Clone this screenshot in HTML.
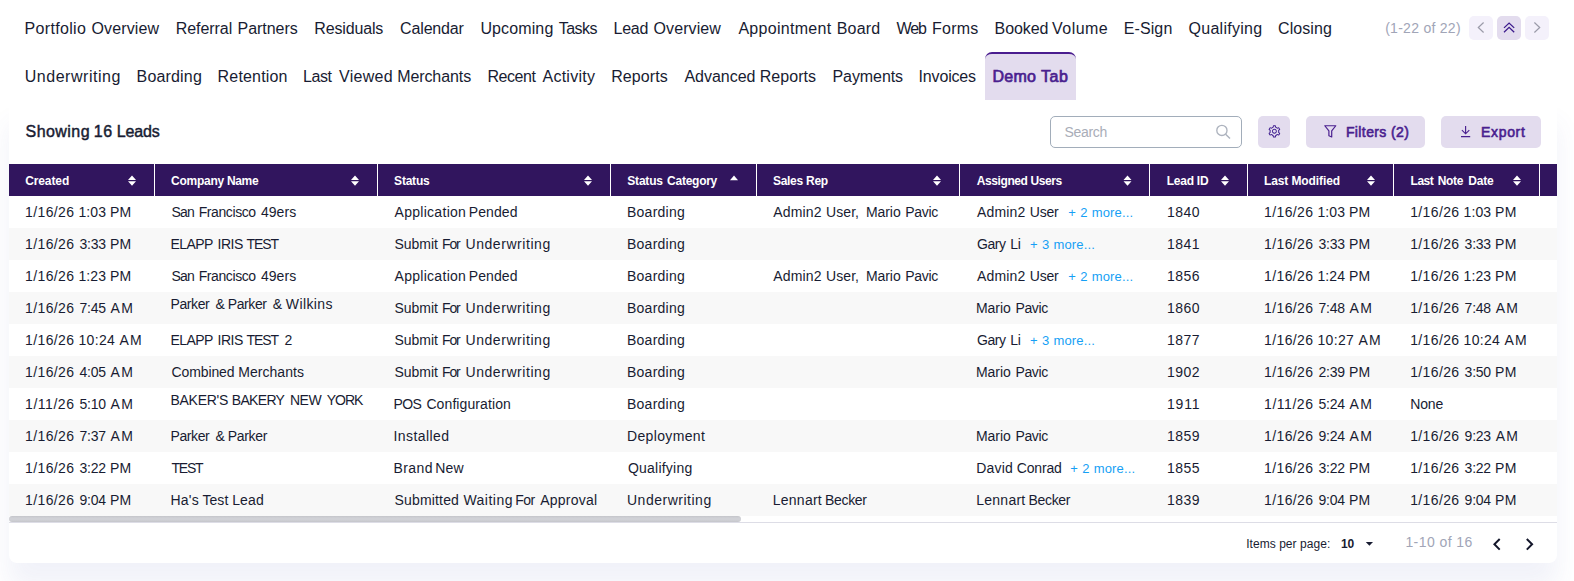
<!DOCTYPE html>
<html lang="en">
<head>
<meta charset="utf-8">
<title>Leads - Demo Tab</title>
<style>
*{box-sizing:border-box;margin:0;padding:0}
html,body{width:1574px;height:581px;overflow:hidden;background:#fff}
body{position:relative;font-family:"Liberation Sans", sans-serif;}
.t{position:absolute;display:block;white-space:pre;line-height:20px;height:20px;margin:0}
.f0{font-size:16px;font-weight:400;color:#181c32}
.f1{font-size:16px;font-weight:400;color:#4a1f8f}
.f2{font-size:14px;font-weight:400;color:#a1a5b7}
.f3{font-size:14px;font-weight:400;color:#a9adb8}
.f4{font-size:14px;font-weight:400;color:#4a1f8f}
.f5{font-size:12px;font-weight:400;color:#181c32}
.f6{font-size:12px;font-weight:700;color:#181c32}
.f7{font-size:12px;font-weight:700;color:#ffffff}
.f8{font-size:14px;font-weight:400;color:#181c32}
.f9{font-size:13px;font-weight:400;color:#169ff5}
h2{font:inherit}
a{color:inherit;text-decoration:none}
.semi{-webkit-text-stroke:0.45px currentColor}
.semi2{-webkit-text-stroke:0.7px currentColor}
.semi3{-webkit-text-stroke:0.6px currentColor}
.ic{position:absolute;display:block;overflow:visible}
.tabbar{position:absolute;left:0;top:0;width:1574px;height:100px;background:#fff}
.tab-active{position:absolute;left:985px;top:52px;width:91px;height:48px;background:#e3dcee;border-top:2px solid #4a1d8f;border-radius:7px 7px 0 0}
.pgbtn{position:absolute;top:16px;width:24px;height:24px;border-radius:5px;background:#f4f1fb}
.pgbtn.on{background:#e3dcee}
.card{position:absolute;left:9px;top:100px;width:1548px;height:463px;background:#fff;border-radius:0 0 8px 8px;box-shadow:0 24px 26px 0 rgba(72,84,176,.078)}
.search{position:absolute;left:1050px;top:116px;width:192px;height:32px;border:1px solid #a2adba;border-radius:5px;background:#fff}
.btn{position:absolute;top:116px;height:32px;border-radius:5px;background:#e3dcee}
.thead{position:absolute;left:0;top:64px;width:1548px;height:32px;background:#31155e}
.sep{position:absolute;top:0;width:1px;height:32px;background:#fff}
.row{position:absolute;left:0;width:1548px;height:32px;background:#fff}
.row.alt{background:#f8f8f8}
.sthumb{position:absolute;left:0;top:416px;width:732px;height:6px;border-radius:3px;background:linear-gradient(#c4c5ca,#d0d1d6 35%,#d0d1d6 65%,#c4c5ca)}
.hr{position:absolute;left:0;top:422px;width:1548px;height:1px;background:#dddde6}
</style>
</head>
<body>
<div class="card">
  <div class="thead"><i class="sep" style="left:145px"></i><i class="sep" style="left:368px"></i><i class="sep" style="left:601px"></i><i class="sep" style="left:747px"></i><i class="sep" style="left:950px"></i><i class="sep" style="left:1140px"></i><i class="sep" style="left:1238px"></i><i class="sep" style="left:1384px"></i><i class="sep" style="left:1530px"></i></div>
  <div class="row" style="top:96px"></div><div class="row alt" style="top:128px"></div><div class="row" style="top:160px"></div><div class="row alt" style="top:192px"></div><div class="row" style="top:224px"></div><div class="row alt" style="top:256px"></div><div class="row" style="top:288px"></div><div class="row alt" style="top:320px"></div><div class="row" style="top:352px"></div><div class="row alt" style="top:384px"></div>
  <div class="hr"></div>
  <div class="sthumb"></div>
</div>
<div class="tabbar">
  <div class="tab-active"></div>
  <div class="pgbtn" style="left:1469px"></div>
  <div class="pgbtn on" style="left:1497px"></div>
  <div class="pgbtn" style="left:1525px"></div>
  <svg class="ic" style="left:1469px;top:16px" width="24" height="24" viewBox="0 0 24 24"><path d="M14.6 6.5 L9.3 11.5 L14.6 16.5" fill="none" stroke="#9b9ba9" stroke-width="1.2"/></svg>
  <svg class="ic" style="left:1497px;top:16px" width="24" height="24" viewBox="0 0 24 24"><path d="M7 11.9 L12.1 7.1 L17.2 11.9 M7 16.2 L12.1 11.4 L17.2 16.2" fill="none" stroke="#3c1a8c" stroke-width="1.3"/></svg>
  <svg class="ic" style="left:1525px;top:16px" width="24" height="24" viewBox="0 0 24 24"><path d="M9.4 6.5 L14.7 11.5 L9.4 16.5" fill="none" stroke="#9b9ba9" stroke-width="1.2"/></svg>
</div>
<nav class="tabs">
<a class="t f0 tab" style="left:24.60px;top:19.26px"><span style="letter-spacing:0.325px">Portfolio</span> <span style="letter-spacing:0.154px;margin-left:0.73px">Overview</span></a>
<a class="t f0 tab" style="left:175.70px;top:19.26px"><span style="letter-spacing:-0.050px">Referral</span> <span style="letter-spacing:-0.024px;margin-left:0.85px">Partners</span></a>
<a class="t f0 tab" style="left:314.30px;top:19.26px"><span style="letter-spacing:-0.157px">Residuals</span></a>
<a class="t f0 tab" style="left:400.10px;top:19.26px"><span style="letter-spacing:-0.157px">Calendar</span></a>
<a class="t f0 tab" style="left:480.40px;top:19.26px"><span style="letter-spacing:0.124px">Upcoming</span> <span style="letter-spacing:-0.525px;margin-left:0.83px">Tasks</span></a>
<a class="t f0 tab" style="left:613.50px;top:19.26px"><span style="letter-spacing:-0.232px">Lead</span> <span style="letter-spacing:0.096px;margin-left:0.89px">Overview</span></a>
<a class="t f0 tab" style="left:738.40px;top:19.26px"><span style="letter-spacing:0.291px">Appointment</span> <span style="letter-spacing:0.201px;margin-left:0.82px">Board</span></a>
<a class="t f0 tab" style="left:896.50px;top:19.26px"><span style="letter-spacing:-1.055px">Web</span> <span style="letter-spacing:0.193px;margin-left:1.71px">Forms</span></a>
<a class="t f0 tab" style="left:994.60px;top:19.26px"><span style="letter-spacing:-0.073px">Booked</span> <span style="letter-spacing:0.466px;margin-left:-0.87px">Volume</span></a>
<a class="t f0 tab" style="left:1123.70px;top:19.26px"><span style="letter-spacing:0.115px">E-Sign</span></a>
<a class="t f0 tab" style="left:1188.50px;top:19.26px"><span style="letter-spacing:0.272px">Qualifying</span></a>
<a class="t f0 tab" style="left:1278.00px;top:19.26px"><span style="letter-spacing:0.090px">Closing</span></a>
<a class="t f0 tab" style="left:24.80px;top:67.46px"><span style="letter-spacing:0.517px">Underwriting</span></a>
<a class="t f0 tab" style="left:136.60px;top:67.46px"><span style="letter-spacing:0.165px">Boarding</span></a>
<a class="t f0 tab" style="left:217.60px;top:67.46px"><span style="letter-spacing:0.176px">Retention</span></a>
<a class="t f0 tab" style="left:303.00px;top:67.46px"><span style="letter-spacing:-0.399px">Last</span> <span style="letter-spacing:0.282px;margin-left:2.91px">Viewed</span> <span style="letter-spacing:-0.087px;margin-left:-0.23px">Merchants</span></a>
<a class="t f0 tab" style="left:487.50px;top:67.46px"><span style="letter-spacing:-0.450px">Recent</span> <span style="letter-spacing:0.247px;margin-left:2.56px">Activity</span></a>
<a class="t f0 tab" style="left:611.20px;top:67.46px"><span style="letter-spacing:0.079px">Reports</span></a>
<a class="t f0 tab" style="left:684.40px;top:67.46px"><span style="letter-spacing:-0.009px">Advanced</span> <span style="letter-spacing:0.063px;margin-left:-0.23px">Reports</span></a>
<a class="t f0 tab" style="left:832.50px;top:67.46px"><span style="letter-spacing:-0.077px">Payments</span></a>
<a class="t f0 tab" style="left:918.60px;top:67.46px"><span style="letter-spacing:-0.171px">Invoices</span></a>
<a class="t f1 semi2 tab active" style="left:992.40px;top:67.26px"><span style="letter-spacing:0.306px">Demo</span> <span style="letter-spacing:0.451px;margin-left:0.35px">Tab</span></a>
</nav>
<div class="search"></div>
<svg class="ic" style="left:1214px;top:123px" width="18" height="18" viewBox="0 0 18 18"><circle cx="7.9" cy="7.4" r="5.1" fill="none" stroke="#adb3be" stroke-width="1.35"/><path d="M11.6 11.2 L16 15.5" stroke="#adb3be" stroke-width="1.45" fill="none"/></svg>
<div class="btn" style="left:1258px;width:32px"></div>
<div class="btn" style="left:1306px;width:119px"></div>
<div class="btn" style="left:1441px;width:100px"></div>
<svg class="ic" style="left:1267px;top:124px" width="16" height="16" viewBox="0 0 16 16"><path transform="translate(0.4 0.4) scale(0.013671875)" fill="#3d1b8e" d="M924.8 625.7l-65.5-56c3.100-19 4.700-38.400 4.700-57.800s-1.600-38.800-4.700-57.800l65.500-56a32.030 32.030 0 0 0 9.300-35.200l-.9-2.600a442.340 442.340 0 0 0-79.700-137.900l-1.800-2.100a32.120 32.120 0 0 0-35.100-9.500l-81.300 28.900c-30-24.600-63.500-44-99.700-57.600l-15.700-85a32.050 32.050 0 0 0-25.800-25.700l-2.700-.5c-52.100-9.400-106.900-9.400-159 0l-2.700.5a32.050 32.050 0 0 0-25.800 25.700l-15.800 85.400a351.860 351.860 0 0 0-99 57.400l-81.900-29.100a32 32 0 0 0-35.100 9.500l-1.800 2.100a446.020 446.020 0 0 0-79.700 137.900l-.9 2.600c-4.500 12.500-.8 26.500 9.300 35.200l66.300 56.600c-3.100 18.800-4.600 38-4.600 57.100 0 19.200 1.500 38.400 4.600 57.100L99 625.500a32.030 32.030 0 0 0-9.300 35.200l.9 2.600c18.100 50.400 44.900 96.900 79.700 137.900l1.800 2.100a32.120 32.120 0 0 0 35.100 9.500l81.900-29.100c29.800 24.500 63.100 43.900 99 57.400l15.800 85.400a32.050 32.050 0 0 0 25.800 25.700l2.700.5a449.400 449.400 0 0 0 159 0l2.700-.5a32.050 32.050 0 0 0 25.800-25.700l15.700-85a350 350 0 0 0 99.700-57.600l81.300 28.900a32 32 0 0 0 35.100-9.500l1.800-2.100c34.800-41.100 61.600-87.500 79.700-137.900l.9-2.600c4.500-12.300.8-26.300-9.300-35zM788.300 465.900c2.500 15.100 3.800 30.600 3.800 46.100s-1.300 31-3.800 46.100l-6.600 40.100 74.700 63.900a370.030 370.030 0 0 1-42.600 73.600L721 702.800l-31.400 25.800c-23.900 19.600-50.500 35-79.300 45.800l-38.100 14.300-17.900 97a377.500 377.500 0 0 1-85 0l-17.900-97.200-37.800-14.500c-28.500-10.800-55-26.200-78.700-45.700l-31.400-25.900-93.400 33.200c-17-22.900-31.200-47.600-42.600-73.600l75.500-64.500-6.500-40c-2.400-14.900-3.700-30.300-3.700-45.500 0-15.300 1.200-30.600 3.700-45.500l6.500-40-75.500-64.500c11.300-26.100 25.600-50.700 42.600-73.600l93.400 33.200 31.400-25.900c23.700-19.500 50.200-34.900 78.700-45.700l37.900-14.300 17.900-97.200c28.100-3.200 56.800-3.200 85 0l17.900 97 38.100 14.300c28.700 10.800 55.400 26.200 79.300 45.800l31.400 25.800 92.800-32.900c17 22.900 31.200 47.600 42.600 73.600L781.800 426l6.500 39.900zM512 326c-97.200 0-176 78.800-176 176s78.800 176 176 176 176-78.800 176-176-78.800-176-176-176zm79.200 255.200A111.600 111.600 0 0 1 512 614c-29.900 0-58-11.700-79.200-32.800A111.600 111.600 0 0 1 400 502c0-29.900 11.700-58 32.800-79.200C454 401.600 482.100 390 512 390c29.900 0 58 11.600 79.200 32.800A111.600 111.600 0 0 1 624 502c0 29.900-11.700 58-32.800 79.200z"/></svg>
<svg class="ic" style="left:1323px;top:124px" width="15" height="15" viewBox="0 0 15 15"><path d="M1.8 1.75 H12.8 L8.7 6.9 V13 L5.9 11.8 V6.9 Z" fill="none" stroke="#4a1f8f" stroke-width="1.2" stroke-linejoin="round"/></svg>
<svg class="ic" style="left:1460px;top:125px" width="12" height="13" viewBox="0 0 12 13"><path d="M5.6 1 V8.6 M1.9 5.2 L5.6 8.8 L9.3 5.2 M1 11.6 H10.2" fill="none" stroke="#4a1f8f" stroke-width="1.15"/></svg>
<span class="t f2 p" style="left:1385.20px;top:17.75px"><span style="letter-spacing:0.272px">(1-22 of 22)</span></span>
<h2 class="t f0 semi title" style="left:25.50px;top:122.46px"><span style="letter-spacing:0.454px">Showing</span> <span style="letter-spacing:0.502px;margin-left:-0.70px">16</span> <span style="letter-spacing:-0.173px;margin-left:-0.35px">Leads</span></h2>
<span class="t f3 p" style="left:1064.60px;top:121.75px"><span style="letter-spacing:-0.354px">Search</span></span>
<span class="t f4 semi3 p" style="left:1345.90px;top:122.05px"><span style="letter-spacing:0.395px">Filters (2)</span></span>
<span class="t f4 semi3 p" style="left:1480.90px;top:122.05px"><span style="letter-spacing:0.706px">Export</span></span>
<span class="t f5 p" style="left:1246.20px;top:534.14px"><span style="letter-spacing:0.047px">Items per page:</span></span>
<span class="t f6 p" style="left:1340.90px;top:534.14px"><span style="letter-spacing:0.026px">10</span></span>
<span class="t f2 p" style="left:1405.40px;top:532.45px"><span style="letter-spacing:0.438px">1-10 of 16</span></span>
<div class="thtext">
<svg class="ic" style="left:128px;top:175px" width="10" height="12" viewBox="0 0 10 12"><path d="M0 4.9 L4 0.4 L8 4.9 Z M0 6.2 L8 6.2 L4 10.8 Z" fill="#fff"/></svg><svg class="ic" style="left:351px;top:175px" width="10" height="12" viewBox="0 0 10 12"><path d="M0 4.9 L4 0.4 L8 4.9 Z M0 6.2 L8 6.2 L4 10.8 Z" fill="#fff"/></svg><svg class="ic" style="left:584px;top:175px" width="10" height="12" viewBox="0 0 10 12"><path d="M0 4.9 L4 0.4 L8 4.9 Z M0 6.2 L8 6.2 L4 10.8 Z" fill="#fff"/></svg><svg class="ic" style="left:933px;top:175px" width="10" height="12" viewBox="0 0 10 12"><path d="M0 4.9 L4 0.4 L8 4.9 Z M0 6.2 L8 6.2 L4 10.8 Z" fill="#fff"/></svg><svg class="ic" style="left:1123px;top:175px" width="10" height="12" viewBox="0 0 10 12"><path d="M0.5 4.9 L4.5 0.4 L8.5 4.9 Z M0.5 6.2 L8.5 6.2 L4.5 10.8 Z" fill="#fff"/></svg><svg class="ic" style="left:1221px;top:175px" width="10" height="12" viewBox="0 0 10 12"><path d="M0 4.9 L4 0.4 L8 4.9 Z M0 6.2 L8 6.2 L4 10.8 Z" fill="#fff"/></svg><svg class="ic" style="left:1367px;top:175px" width="10" height="12" viewBox="0 0 10 12"><path d="M0 4.9 L4 0.4 L8 4.9 Z M0 6.2 L8 6.2 L4 10.8 Z" fill="#fff"/></svg><svg class="ic" style="left:1513px;top:175px" width="10" height="12" viewBox="0 0 10 12"><path d="M0 4.9 L4 0.4 L8 4.9 Z M0 6.2 L8 6.2 L4 10.8 Z" fill="#fff"/></svg><svg class="ic" style="left:730px;top:175px" width="10" height="6" viewBox="0 0 10 6"><path d="M0 5.2 L4 0.6 L8 5.2 Z" fill="#fff"/></svg>
<span class="t f7 th" style="left:25.20px;top:171.04px"><span style="letter-spacing:-0.109px">Created</span></span>
<span class="t f7 th" style="left:171.10px;top:171.04px"><span style="letter-spacing:-0.267px">Company</span> <span style="letter-spacing:-0.370px;margin-left:-0.24px">Name</span></span>
<span class="t f7 th" style="left:394.10px;top:171.04px"><span style="letter-spacing:-0.220px">Status</span></span>
<span class="t f7 th" style="left:627.30px;top:171.04px"><span style="letter-spacing:-0.200px">Status</span> <span style="letter-spacing:-0.263px;margin-left:0.99px">Category</span></span>
<span class="t f7 th" style="left:772.90px;top:171.04px"><span style="letter-spacing:-0.267px">Sales Rep</span></span>
<span class="t f7 th" style="left:976.70px;top:171.04px"><span style="letter-spacing:-0.395px">Assigned Users</span></span>
<span class="t f7 th" style="left:1166.70px;top:171.04px"><span style="letter-spacing:-0.246px">Lead ID</span></span>
<span class="t f7 th" style="left:1264.00px;top:171.04px"><span style="letter-spacing:-0.108px">Last Modified</span></span>
<span class="t f7 th" style="left:1410.60px;top:171.04px"><span style="letter-spacing:-0.526px">Last</span> <span style="letter-spacing:-0.364px;margin-left:1.30px">Note</span> <span style="letter-spacing:-0.145px;margin-left:1.76px">Date</span></span>
</div>
<div class="tbody">
<div class="tr">
<span class="t f8 p" style="left:25.10px;top:202.25px"><span style="letter-spacing:0.363px">1/16/26</span> <span style="letter-spacing:0.079px;margin-left:0.26px">1:03</span> <span style="letter-spacing:0.362px;margin-left:-0.06px">PM</span></span>
<span class="t f8 p" style="left:171.50px;top:202.25px"><span style="letter-spacing:-0.762px">San</span> <span style="letter-spacing:-0.412px;margin-left:0.69px">Francisco</span> <span style="letter-spacing:0.070px;margin-left:1.34px">49ers</span></span>
<span class="t f8 p" style="left:394.50px;top:202.25px"><span style="letter-spacing:0.290px">Application</span> <span style="letter-spacing:0.084px;margin-left:-1.27px">Pended</span></span>
<span class="t f8 p" style="left:627.00px;top:202.25px"><span style="letter-spacing:0.249px">Boarding</span></span>
<span class="t f8 p" style="left:773.30px;top:202.25px"><span style="letter-spacing:0.143px">Admin2</span> <span style="letter-spacing:0.053px;margin-left:0.58px">User,</span></span>
<span class="t f8 p" style="left:865.90px;top:202.25px"><span style="letter-spacing:-0.055px">Mario</span> <span style="letter-spacing:-0.334px;margin-left:0.78px">Pavic</span></span>
<span class="t f8 p" style="left:977.00px;top:202.25px"><span style="letter-spacing:0.143px">Admin2</span> <span style="letter-spacing:-0.265px;margin-left:0.58px">User</span></span>
<span class="t f9 more" style="left:1068.30px;top:202.60px"><span style="letter-spacing:0.000px">+</span> <span style="letter-spacing:0.000px;margin-left:0.70px">2</span> <span style="letter-spacing:0.160px;margin-left:0.66px">more...</span></span>
<span class="t f8 p" style="left:1167.00px;top:202.25px"><span style="letter-spacing:0.447px">1840</span></span>
<span class="t f8 p" style="left:1264.10px;top:202.25px"><span style="letter-spacing:0.363px">1/16/26</span> <span style="letter-spacing:0.079px;margin-left:0.26px">1:03</span> <span style="letter-spacing:0.362px;margin-left:-0.06px">PM</span></span>
<span class="t f8 p" style="left:1410.20px;top:202.25px"><span style="letter-spacing:0.363px">1/16/26</span> <span style="letter-spacing:0.079px;margin-left:0.26px">1:03</span> <span style="letter-spacing:0.362px;margin-left:-0.06px">PM</span></span>
</div>
<div class="tr">
<span class="t f8 p" style="left:25.10px;top:234.25px"><span style="letter-spacing:0.363px">1/16/26</span> <span style="letter-spacing:-0.254px;margin-left:1.26px">3:33</span> <span style="letter-spacing:0.362px;margin-left:0.28px">PM</span></span>
<span class="t f8 p" style="left:170.50px;top:234.25px"><span style="letter-spacing:-0.550px">ELAPP</span> <span style="letter-spacing:-0.397px;margin-left:0.62px">IRIS</span> <span style="letter-spacing:-1.009px;margin-left:-0.53px">TEST</span></span>
<span class="t f8 p" style="left:394.50px;top:234.25px"><span style="letter-spacing:-0.027px">Submit</span> <span style="letter-spacing:-1.169px;margin-left:0.20px">For</span> <span style="letter-spacing:0.555px;margin-left:2.12px">Underwriting</span></span>
<span class="t f8 p" style="left:627.00px;top:234.25px"><span style="letter-spacing:0.249px">Boarding</span></span>
<span class="t f8 p" style="left:977.00px;top:234.25px"><span style="letter-spacing:-0.479px">Gary</span> <span style="letter-spacing:-0.386px;margin-left:0.99px">Li</span></span>
<span class="t f9 more" style="left:1030.00px;top:234.60px"><span style="letter-spacing:0.000px">+</span> <span style="letter-spacing:0.000px;margin-left:0.70px">3</span> <span style="letter-spacing:0.160px;margin-left:0.66px">more...</span></span>
<span class="t f8 p" style="left:1167.00px;top:234.25px"><span style="letter-spacing:0.447px">1841</span></span>
<span class="t f8 p" style="left:1264.10px;top:234.25px"><span style="letter-spacing:0.363px">1/16/26</span> <span style="letter-spacing:-0.254px;margin-left:1.26px">3:33</span> <span style="letter-spacing:0.362px;margin-left:0.28px">PM</span></span>
<span class="t f8 p" style="left:1410.20px;top:234.25px"><span style="letter-spacing:0.363px">1/16/26</span> <span style="letter-spacing:-0.254px;margin-left:1.26px">3:33</span> <span style="letter-spacing:0.362px;margin-left:0.28px">PM</span></span>
</div>
<div class="tr">
<span class="t f8 p" style="left:25.10px;top:266.25px"><span style="letter-spacing:0.363px">1/16/26</span> <span style="letter-spacing:0.079px;margin-left:0.26px">1:23</span> <span style="letter-spacing:0.362px;margin-left:-0.06px">PM</span></span>
<span class="t f8 p" style="left:171.50px;top:266.25px"><span style="letter-spacing:-0.762px">San</span> <span style="letter-spacing:-0.412px;margin-left:0.69px">Francisco</span> <span style="letter-spacing:0.070px;margin-left:1.34px">49ers</span></span>
<span class="t f8 p" style="left:394.50px;top:266.25px"><span style="letter-spacing:0.290px">Application</span> <span style="letter-spacing:0.084px;margin-left:-1.27px">Pended</span></span>
<span class="t f8 p" style="left:627.00px;top:266.25px"><span style="letter-spacing:0.249px">Boarding</span></span>
<span class="t f8 p" style="left:773.30px;top:266.25px"><span style="letter-spacing:0.143px">Admin2</span> <span style="letter-spacing:0.053px;margin-left:0.58px">User,</span></span>
<span class="t f8 p" style="left:865.90px;top:266.25px"><span style="letter-spacing:-0.055px">Mario</span> <span style="letter-spacing:-0.334px;margin-left:0.78px">Pavic</span></span>
<span class="t f8 p" style="left:977.00px;top:266.25px"><span style="letter-spacing:0.143px">Admin2</span> <span style="letter-spacing:-0.265px;margin-left:0.58px">User</span></span>
<span class="t f9 more" style="left:1068.30px;top:266.60px"><span style="letter-spacing:0.000px">+</span> <span style="letter-spacing:0.000px;margin-left:0.70px">2</span> <span style="letter-spacing:0.160px;margin-left:0.66px">more...</span></span>
<span class="t f8 p" style="left:1167.00px;top:266.25px"><span style="letter-spacing:0.447px">1856</span></span>
<span class="t f8 p" style="left:1264.10px;top:266.25px"><span style="letter-spacing:0.363px">1/16/26</span> <span style="letter-spacing:0.079px;margin-left:0.26px">1:24</span> <span style="letter-spacing:0.362px;margin-left:-0.06px">PM</span></span>
<span class="t f8 p" style="left:1410.20px;top:266.25px"><span style="letter-spacing:0.363px">1/16/26</span> <span style="letter-spacing:0.079px;margin-left:0.26px">1:23</span> <span style="letter-spacing:0.362px;margin-left:-0.06px">PM</span></span>
</div>
<div class="tr">
<span class="t f8 p" style="left:25.10px;top:298.25px"><span style="letter-spacing:0.363px">1/16/26</span> <span style="letter-spacing:-0.254px;margin-left:1.26px">7:45</span> <span style="letter-spacing:1.262px;margin-left:0.98px">AM</span></span>
<span class="t f8 p" style="left:170.50px;top:294.25px"><span style="letter-spacing:-0.414px">Parker</span> <span style="letter-spacing:0.000px;margin-left:2.36px">&amp;</span> <span style="letter-spacing:-0.394px;margin-left:-1.03px">Parker</span> <span style="letter-spacing:0.000px;margin-left:2.14px">&amp;</span> <span style="letter-spacing:0.395px;margin-left:-0.03px">Wilkins</span></span>
<span class="t f8 p" style="left:394.50px;top:298.25px"><span style="letter-spacing:-0.027px">Submit</span> <span style="letter-spacing:-1.169px;margin-left:0.20px">For</span> <span style="letter-spacing:0.555px;margin-left:2.12px">Underwriting</span></span>
<span class="t f8 p" style="left:627.00px;top:298.25px"><span style="letter-spacing:0.249px">Boarding</span></span>
<span class="t f8 p" style="left:976.00px;top:298.25px"><span style="letter-spacing:-0.055px">Mario</span> <span style="letter-spacing:-0.334px;margin-left:0.78px">Pavic</span></span>
<span class="t f8 p" style="left:1167.00px;top:298.25px"><span style="letter-spacing:0.447px">1860</span></span>
<span class="t f8 p" style="left:1264.10px;top:298.25px"><span style="letter-spacing:0.363px">1/16/26</span> <span style="letter-spacing:-0.254px;margin-left:1.26px">7:48</span> <span style="letter-spacing:1.262px;margin-left:0.98px">AM</span></span>
<span class="t f8 p" style="left:1410.20px;top:298.25px"><span style="letter-spacing:0.363px">1/16/26</span> <span style="letter-spacing:-0.254px;margin-left:1.26px">7:48</span> <span style="letter-spacing:1.262px;margin-left:0.98px">AM</span></span>
</div>
<div class="tr">
<span class="t f8 p" style="left:25.10px;top:330.25px"><span style="letter-spacing:0.363px">1/16/26</span> <span style="letter-spacing:0.313px;margin-left:0.26px">10:24</span> <span style="letter-spacing:1.262px;margin-left:0.41px">AM</span></span>
<span class="t f8 p" style="left:170.50px;top:330.25px"><span style="letter-spacing:-0.550px">ELAPP</span> <span style="letter-spacing:-0.397px;margin-left:0.62px">IRIS</span> <span style="letter-spacing:-1.009px;margin-left:-0.53px">TEST</span> <span style="letter-spacing:0.000px;margin-left:2.47px">2</span></span>
<span class="t f8 p" style="left:394.50px;top:330.25px"><span style="letter-spacing:-0.027px">Submit</span> <span style="letter-spacing:-1.169px;margin-left:0.20px">For</span> <span style="letter-spacing:0.555px;margin-left:2.12px">Underwriting</span></span>
<span class="t f8 p" style="left:627.00px;top:330.25px"><span style="letter-spacing:0.249px">Boarding</span></span>
<span class="t f8 p" style="left:977.00px;top:330.25px"><span style="letter-spacing:-0.479px">Gary</span> <span style="letter-spacing:-0.386px;margin-left:0.99px">Li</span></span>
<span class="t f9 more" style="left:1030.00px;top:330.60px"><span style="letter-spacing:0.000px">+</span> <span style="letter-spacing:0.000px;margin-left:0.70px">3</span> <span style="letter-spacing:0.160px;margin-left:0.66px">more...</span></span>
<span class="t f8 p" style="left:1167.00px;top:330.25px"><span style="letter-spacing:0.447px">1877</span></span>
<span class="t f8 p" style="left:1264.10px;top:330.25px"><span style="letter-spacing:0.363px">1/16/26</span> <span style="letter-spacing:0.313px;margin-left:0.26px">10:27</span> <span style="letter-spacing:1.262px;margin-left:0.41px">AM</span></span>
<span class="t f8 p" style="left:1410.20px;top:330.25px"><span style="letter-spacing:0.363px">1/16/26</span> <span style="letter-spacing:0.313px;margin-left:0.26px">10:24</span> <span style="letter-spacing:1.262px;margin-left:0.41px">AM</span></span>
</div>
<div class="tr">
<span class="t f8 p" style="left:25.10px;top:362.25px"><span style="letter-spacing:0.363px">1/16/26</span> <span style="letter-spacing:-0.254px;margin-left:1.26px">4:05</span> <span style="letter-spacing:1.262px;margin-left:0.98px">AM</span></span>
<span class="t f8 p" style="left:171.50px;top:362.25px"><span style="letter-spacing:-0.104px">Combined</span> <span style="letter-spacing:0.030px;margin-left:-0.07px">Merchants</span></span>
<span class="t f8 p" style="left:394.50px;top:362.25px"><span style="letter-spacing:-0.027px">Submit</span> <span style="letter-spacing:-1.169px;margin-left:0.20px">For</span> <span style="letter-spacing:0.555px;margin-left:2.12px">Underwriting</span></span>
<span class="t f8 p" style="left:627.00px;top:362.25px"><span style="letter-spacing:0.249px">Boarding</span></span>
<span class="t f8 p" style="left:976.00px;top:362.25px"><span style="letter-spacing:-0.055px">Mario</span> <span style="letter-spacing:-0.334px;margin-left:0.78px">Pavic</span></span>
<span class="t f8 p" style="left:1167.00px;top:362.25px"><span style="letter-spacing:0.447px">1902</span></span>
<span class="t f8 p" style="left:1264.10px;top:362.25px"><span style="letter-spacing:0.363px">1/16/26</span> <span style="letter-spacing:-0.254px;margin-left:1.26px">2:39</span> <span style="letter-spacing:0.362px;margin-left:0.28px">PM</span></span>
<span class="t f8 p" style="left:1410.20px;top:362.25px"><span style="letter-spacing:0.363px">1/16/26</span> <span style="letter-spacing:-0.254px;margin-left:1.26px">3:50</span> <span style="letter-spacing:0.362px;margin-left:0.28px">PM</span></span>
</div>
<div class="tr">
<span class="t f8 p" style="left:25.10px;top:394.25px"><span style="letter-spacing:0.536px">1/11/26</span> <span style="letter-spacing:-0.254px;margin-left:1.09px">5:10</span> <span style="letter-spacing:1.262px;margin-left:0.98px">AM</span></span>
<span class="t f8 p" style="left:170.50px;top:390.25px"><span style="letter-spacing:-0.289px">BAKER'S</span> <span style="letter-spacing:-0.662px;margin-left:-0.14px">BAKERY</span> <span style="letter-spacing:-0.474px;margin-left:1.73px">NEW</span> <span style="letter-spacing:-1.046px;margin-left:1.77px">YORK</span></span>
<span class="t f8 p" style="left:393.50px;top:394.25px"><span style="letter-spacing:-0.564px">POS</span> <span style="letter-spacing:0.101px;margin-left:1.14px">Configuration</span></span>
<span class="t f8 p" style="left:627.00px;top:394.25px"><span style="letter-spacing:0.249px">Boarding</span></span>
<span class="t f8 p" style="left:1167.00px;top:394.25px"><span style="letter-spacing:0.794px">1911</span></span>
<span class="t f8 p" style="left:1264.10px;top:394.25px"><span style="letter-spacing:0.536px">1/11/26</span> <span style="letter-spacing:-0.254px;margin-left:1.09px">5:24</span> <span style="letter-spacing:1.262px;margin-left:0.98px">AM</span></span>
<span class="t f8 p" style="left:1410.20px;top:394.25px"><span style="letter-spacing:-0.128px">None</span></span>
</div>
<div class="tr">
<span class="t f8 p" style="left:25.10px;top:426.25px"><span style="letter-spacing:0.363px">1/16/26</span> <span style="letter-spacing:-0.254px;margin-left:1.26px">7:37</span> <span style="letter-spacing:1.262px;margin-left:0.98px">AM</span></span>
<span class="t f8 p" style="left:170.50px;top:426.25px"><span style="letter-spacing:-0.414px">Parker</span> <span style="letter-spacing:0.000px;margin-left:2.36px">&amp;</span> <span style="letter-spacing:-0.334px;margin-left:-1.03px">Parker</span></span>
<span class="t f8 p" style="left:393.50px;top:426.25px"><span style="letter-spacing:0.418px">Installed</span></span>
<span class="t f8 p" style="left:627.00px;top:426.25px"><span style="letter-spacing:0.354px">Deployment</span></span>
<span class="t f8 p" style="left:976.00px;top:426.25px"><span style="letter-spacing:-0.055px">Mario</span> <span style="letter-spacing:-0.334px;margin-left:0.78px">Pavic</span></span>
<span class="t f8 p" style="left:1167.00px;top:426.25px"><span style="letter-spacing:0.447px">1859</span></span>
<span class="t f8 p" style="left:1264.10px;top:426.25px"><span style="letter-spacing:0.363px">1/16/26</span> <span style="letter-spacing:-0.254px;margin-left:1.26px">9:24</span> <span style="letter-spacing:1.262px;margin-left:0.98px">AM</span></span>
<span class="t f8 p" style="left:1410.20px;top:426.25px"><span style="letter-spacing:0.363px">1/16/26</span> <span style="letter-spacing:-0.254px;margin-left:1.26px">9:23</span> <span style="letter-spacing:1.262px;margin-left:0.98px">AM</span></span>
</div>
<div class="tr">
<span class="t f8 p" style="left:25.10px;top:458.25px"><span style="letter-spacing:0.363px">1/16/26</span> <span style="letter-spacing:-0.254px;margin-left:1.26px">3:22</span> <span style="letter-spacing:0.362px;margin-left:0.28px">PM</span></span>
<span class="t f8 p" style="left:171.40px;top:458.25px"><span style="letter-spacing:-1.176px">TEST</span></span>
<span class="t f8 p" style="left:393.50px;top:458.25px"><span style="letter-spacing:0.407px">Brand</span> <span style="letter-spacing:0.252px;margin-left:-1.68px">New</span></span>
<span class="t f8 p" style="left:628.00px;top:458.25px"><span style="letter-spacing:0.215px">Qualifying</span></span>
<span class="t f8 p" style="left:976.20px;top:458.25px"><span style="letter-spacing:0.198px">David</span> <span style="letter-spacing:-0.186px;margin-left:-0.07px">Conrad</span></span>
<span class="t f9 more" style="left:1070.30px;top:458.60px"><span style="letter-spacing:0.000px">+</span> <span style="letter-spacing:0.000px;margin-left:0.70px">2</span> <span style="letter-spacing:0.160px;margin-left:0.66px">more...</span></span>
<span class="t f8 p" style="left:1167.00px;top:458.25px"><span style="letter-spacing:0.447px">1855</span></span>
<span class="t f8 p" style="left:1264.10px;top:458.25px"><span style="letter-spacing:0.363px">1/16/26</span> <span style="letter-spacing:-0.254px;margin-left:1.26px">3:22</span> <span style="letter-spacing:0.362px;margin-left:0.28px">PM</span></span>
<span class="t f8 p" style="left:1410.20px;top:458.25px"><span style="letter-spacing:0.363px">1/16/26</span> <span style="letter-spacing:-0.254px;margin-left:1.26px">3:22</span> <span style="letter-spacing:0.362px;margin-left:0.28px">PM</span></span>
</div>
<div class="tr">
<span class="t f8 p" style="left:25.10px;top:490.25px"><span style="letter-spacing:0.363px">1/16/26</span> <span style="letter-spacing:-0.254px;margin-left:1.26px">9:04</span> <span style="letter-spacing:0.362px;margin-left:0.28px">PM</span></span>
<span class="t f8 p" style="left:170.40px;top:490.25px"><span style="letter-spacing:0.244px">Ha's</span> <span style="letter-spacing:0.071px;margin-left:-0.43px">Test</span> <span style="letter-spacing:0.181px;margin-left:-0.15px">Lead</span></span>
<span class="t f8 p" style="left:394.50px;top:490.25px"><span style="letter-spacing:0.169px">Submitted</span> <span style="letter-spacing:0.487px;margin-left:0.46px">Waiting</span> <span style="letter-spacing:-0.569px;margin-left:-1.56px">For</span> <span style="letter-spacing:0.208px;margin-left:1.82px">Approval</span></span>
<span class="t f8 p" style="left:627.00px;top:490.25px"><span style="letter-spacing:0.509px">Underwriting</span></span>
<span class="t f8 p" style="left:772.80px;top:490.25px"><span style="letter-spacing:0.235px">Lennart</span> <span style="letter-spacing:-0.302px;margin-left:-0.91px">Becker</span></span>
<span class="t f8 p" style="left:976.30px;top:490.25px"><span style="letter-spacing:0.235px">Lennart</span> <span style="letter-spacing:-0.302px;margin-left:-0.91px">Becker</span></span>
<span class="t f8 p" style="left:1167.00px;top:490.25px"><span style="letter-spacing:0.447px">1839</span></span>
<span class="t f8 p" style="left:1264.10px;top:490.25px"><span style="letter-spacing:0.363px">1/16/26</span> <span style="letter-spacing:-0.254px;margin-left:1.26px">9:04</span> <span style="letter-spacing:0.362px;margin-left:0.28px">PM</span></span>
<span class="t f8 p" style="left:1410.20px;top:490.25px"><span style="letter-spacing:0.363px">1/16/26</span> <span style="letter-spacing:-0.254px;margin-left:1.26px">9:04</span> <span style="letter-spacing:0.362px;margin-left:0.28px">PM</span></span>
</div>
</div>
<svg class="ic" style="left:1365px;top:541px" width="10" height="6" viewBox="0 0 10 6"><path d="M0.8 0.9 H8 L4.4 4.7 Z" fill="#181c32"/></svg>
<svg class="ic" style="left:1485px;top:532px" width="24" height="25" viewBox="0 0 24 25"><path transform="translate(0 0.3)" d="M15.41 7.41L14 6l-6 6 6 6 1.41-1.41L10.83 12z" fill="#14172b"/></svg>
<svg class="ic" style="left:1517px;top:532px" width="25" height="25" viewBox="0 0 25 25"><path transform="translate(0.5 0.3)" d="M10 6L8.59 7.41 13.17 12l-4.58 4.59L10 18l6-6z" fill="#14172b"/></svg>
</body>
</html>
